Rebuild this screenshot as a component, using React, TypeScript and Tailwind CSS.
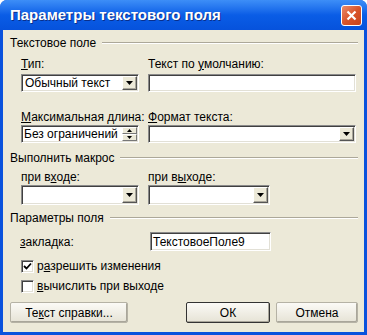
import React from 'react';

const sunken =
  'border border-t-[#8a8a8a] border-l-[#8a8a8a] border-b-white border-r-white shadow-[inset_1px_1px_0_#404040,inset_-1px_-1px_0_#e2e0d6] bg-white';

function Arrow() {
  return (
    <svg width="7" height="4" viewBox="0 0 7 4">
      <path d="M0 0h7L3.5 4z" fill="#000" />
    </svg>
  );
}

function DropButton() {
  return (
    <div className="w-[15px] self-stretch flex items-center justify-center bg-[#ece9d8] border border-t-white border-l-white border-b-[#555] border-r-[#555] shadow-[inset_-1px_-1px_0_#a9a69a]">
      <Arrow />
    </div>
  );
}

function Select({ value = '', width, height = 'h-[18px]' }: { value?: string; width: string; height?: string }) {
  return (
    <div className={`${sunken} ${width} ${height} flex items-stretch p-[1px]`}>
      <div className="flex-1 pl-[2px] flex items-center text-black whitespace-nowrap overflow-hidden">{value}</div>
      <DropButton />
    </div>
  );
}

function GroupHeader({ title }: { title: string }) {
  return (
    <div className="flex items-center gap-[6px] h-[14px]">
      <span className="whitespace-nowrap">{title}</span>
      <div className="flex-1 flex flex-col">
        <div className="h-px bg-[#aca899]" />
        <div className="h-px bg-white" />
      </div>
    </div>
  );
}

function Checkbox({ checked, children }: { checked?: boolean; children: React.ReactNode }) {
  return (
    <div className="flex items-center gap-[3px] h-[14px]">
      <div className={`${sunken} w-[13px] h-[13px] flex items-center justify-center`}>
        {checked && (
          <svg width="9" height="9" viewBox="0 0 9 9">
            <path d="M1 4l2.5 2.5L8 1.5" stroke="#000" strokeWidth="1.8" fill="none" />
          </svg>
        )}
      </div>
      <span>{children}</span>
    </div>
  );
}

function Button({ children, width, def }: { children: React.ReactNode; width: string; def?: boolean }) {
  return (
    <div
      className={`${width} h-[21px] flex items-center justify-center bg-gradient-to-b from-[#fbfaf6] to-[#e6e3d6] rounded-[2px] border ${
        def ? 'border-[#333]' : 'border-[#b5b2a5]'
      } shadow-[inset_-1px_-1px_0_#a9a69a]`}
    >
      {children}
    </div>
  );
}

export default function App() {
  return (
    <div
      className="w-[367px] h-[335px] bg-[#0a52dd] rounded-t-[7px] flex flex-col text-[12px] leading-[14px] text-black"
      style={{ fontFamily: '"Liberation Sans", Arial, sans-serif' }}
    >
      {/* Title bar */}
      <div className="h-[30px] shrink-0 rounded-t-[7px] bg-gradient-to-b from-[#3d8ef7] via-[#0a5de6] to-[#0652dc] flex items-center pl-[10px] pr-[5px]">
        <span className="flex-1 text-white font-bold text-[15px] leading-[18px] [text-shadow:1px_1px_0_#0a2f8a]">
          Параметры текстового поля
        </span>
        <div className="w-[21px] h-[21px] rounded-[3px] border border-white bg-gradient-to-br from-[#e98a6a] via-[#d9542a] to-[#c8431c] flex items-center justify-center">
          <svg width="11" height="11" viewBox="0 0 11 11">
            <path d="M1.5 1.5l8 8M9.5 1.5l-8 8" stroke="#fff" strokeWidth="2.2" />
          </svg>
        </div>
      </div>

      {/* Body */}
      <div className="flex-1 mx-[3px] mb-[3px] bg-[#ece9d8] pl-[7px] pr-[6px] pt-[6px] flex flex-col">
        <GroupHeader title="Текстовое поле" />

        <div className="mt-[7px] pl-[11px] flex gap-[9px]">
          <div className="w-[118px] flex flex-col gap-[3px]">
            <span>
              <u>Т</u>ип:
            </span>
            <Select value="Обычный текст" width="w-[118px]" />
          </div>
          <div className="flex-1 flex flex-col gap-[3px] pr-[2px]">
            <span>
              Текст по <u>у</u>молчанию:
            </span>
            <div className={`${sunken} h-[18px]`} />
          </div>
        </div>

        <div className="mt-[18px] pl-[11px] flex gap-[9px]">
          <div className="w-[118px] flex flex-col gap-[1px]">
            <span className="whitespace-nowrap">
              <u>М</u>аксимальная длина:
            </span>
            <div className={`${sunken} h-[18px] flex items-stretch p-[1px]`}>
              <div className="flex-1 pl-[1px] flex items-center whitespace-nowrap overflow-hidden">Без ограничений</div>
              <div className="w-[15px] flex flex-col">
                <div className="flex-1 flex items-center justify-center bg-[#ece9d8] border border-t-white border-l-white border-b-[#777] border-r-[#777]">
                  <svg width="5" height="3" viewBox="0 0 5 3">
                    <path d="M0 3h5L2.5 0z" fill="#000" />
                  </svg>
                </div>
                <div className="flex-1 flex items-center justify-center bg-[#ece9d8] border border-t-white border-l-white border-b-[#777] border-r-[#777]">
                  <svg width="5" height="3" viewBox="0 0 5 3">
                    <path d="M0 0h5L2.5 3z" fill="#000" />
                  </svg>
                </div>
              </div>
            </div>
          </div>
          <div className="flex-1 flex flex-col gap-[1px] pr-[2px]">
            <span>
              <u>Ф</u>ормат текста:
            </span>
            <Select width="w-full" />
          </div>
        </div>

        <div className="mt-[8px]">
          <GroupHeader title="Выполнить макрос" />
        </div>

        <div className="mt-[5px] pl-[11px] flex gap-[9px]">
          <div className="w-[118px] flex flex-col gap-[1px]">
            <span>
              при в<u>х</u>оде:
            </span>
            <Select width="w-[118px]" height="h-[20px]" />
          </div>
          <div className="w-[122px] flex flex-col gap-[1px]">
            <span>
              при в<u>ы</u>ходе:
            </span>
            <Select width="w-[122px]" height="h-[20px]" />
          </div>
        </div>

        <div className="mt-[6px]">
          <GroupHeader title="Параметры поля" />
        </div>

        <div className="mt-[7px] pl-[10px] flex items-center">
          <span className="w-[130px]">
            <u>з</u>акладка:
          </span>
          <div className={`${sunken} w-[121px] h-[19px] flex items-center pl-[2px]`}>ТекстовоеПоле9</div>
        </div>

        <div className="mt-[8px] pl-[11px] flex flex-col gap-[6px]">
          <Checkbox checked>
            р<u>а</u>зрешить изменения
          </Checkbox>
          <Checkbox>
            <u>в</u>ычислить при выходе
          </Checkbox>
        </div>

        <div className="mt-[9px] flex">
          <Button width="w-[118px]">
            Те<u>к</u>ст справки...
          </Button>
          <div className="flex-1" />
          <Button width="w-[84px]" def>
            ОК
          </Button>
          <div className="w-[6px]" />
          <Button width="w-[82px]">Отмена</Button>
        </div>
      </div>
    </div>
  );
}
